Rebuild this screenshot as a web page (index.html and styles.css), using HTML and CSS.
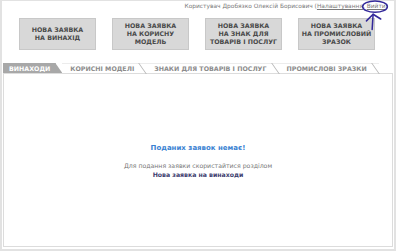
FILE: index.html
```html
<!DOCTYPE html>
<html lang="uk">
  <head>
    <meta charset="UTF-8" />
    <title>Заявки</title>
    <link rel="stylesheet" href="styles.css">
  </head>
  <body>
    <div class="frame">
      <div class="userbar">
        Користувач Дробязко Олексій Борисович (<a href="#">Налаштування</a>, <a href="#">Вийти</a>)
      </div>

      <div class="actions">
        <a class="action" href="#">Нова заявка<br />на винахід</a>
        <a class="action" href="#">Нова заявка<br />на корисну<br />модель</a>
        <a class="action" href="#">Нова заявка<br />на знак для<br />товарів і послуг</a>
        <a class="action" href="#">Нова заявка<br />на промисловий<br />зразок</a>
      </div>

      <div class="tabs">
        <span class="tab active">Винаходи</span>
        <span class="tab">Корисні моделі</span>
        <span class="tab">Знаки для товарів і послуг</span>
        <span class="tab">Промислові зразки</span>
      </div>

      <div class="panel">
        <p class="empty">Поданих заявок немає!</p>
        <p class="hint">Для подання заявки скористайтися розділом<br /><b>Нова заявка на винаходи</b></p>
      </div>

      <!-- позначка від руки навколо "Вийти" -->
      <svg class="mark" viewBox="0 0 40 40" xmlns="http://www.w3.org/2000/svg">
        <ellipse cx="20" cy="7" rx="13" ry="6" fill="none" stroke="#33289a" stroke-width="1.6" />
        <path d="M18 15 L17 31" fill="none" stroke="#33289a" stroke-width="1.6" stroke-linecap="round" />
        <path d="M11 22 L18 15 L26 20" fill="none" stroke="#33289a" stroke-width="1.6" stroke-linecap="round" stroke-linejoin="round" />
      </svg>
    </div>
  </body>
</html>
```

FILE: styles.css
```css
* {
  margin: 0;
  padding: 0;
  box-sizing: border-box;
}

body {
  font-family: "DejaVu Sans", Verdana, sans-serif;
  width: 396px;
  height: 251px;
  overflow: hidden;
  background: white;
}

.frame {
  position: relative;
  height: 251px;
  display: flex;
  flex-direction: column;
  border: 1px solid #e2e2e2;
  border-width: 1px 2px 2px 2px;
  padding: 0 1px 2px 1px;
}

.userbar {
  text-align: right;
  font-size: 5.9px;
  line-height: 8px;
  color: #7a7a7a;
  padding: 1px 5px 0 0;
  height: 10px;
}

.userbar a {
  color: #7a7a7a;
}

.actions {
  display: flex;
  gap: 16px;
  padding-left: 16px;
  margin-top: 7px;
}

.action {
  width: 77px;
  height: 32px;
  display: flex;
  align-items: center;
  justify-content: center;
  text-align: center;
  background: #d8d8d8;
  border: 1px solid #c8c8c8;
  color: #4a4a4a;
  font-size: 6.3px;
  line-height: 8px;
  font-weight: bold;
  text-transform: uppercase;
  text-decoration: none;
}

.tabs {
  display: flex;
  margin-top: 13px;
  height: 10px;
}

.tab {
  position: relative;
  height: 10px;
  padding: 0 12px 0 8px;
  font-size: 6.3px;
  font-weight: bold;
  text-transform: uppercase;
  color: #8c8c8c;
  border-top: 1px solid #ececec;
  line-height: 9px;
}

.tab::after {
  content: "";
  position: absolute;
  right: 3px;
  top: -1px;
  width: 1px;
  height: 11px;
  background: #b8b8b8;
  transform: skewX(35deg);
}

.tab.active {
  background: #a8a8a8;
  color: white;
  padding: 0 12px 0 6px;
  border-top-color: #a8a8a8;
  clip-path: polygon(0 0, calc(100% - 7px) 0, 100% 100%, 0 100%);
}

.tab.active::after {
  display: none;
}

.panel {
  flex: 1;
  border: 1px solid #dcdcdc;
  text-align: center;
  padding-top: 70px;
}

.empty {
  font-size: 7px;
  font-weight: bold;
  color: #3a82d2;
  margin-bottom: 9px;
}

.hint {
  font-size: 6.2px;
  line-height: 9px;
  color: #777;
}

.hint b {
  color: #3d3d6e;
}

.mark {
  position: absolute;
  right: 0;
  top: -1px;
  width: 38px;
  height: 38px;
}
```
